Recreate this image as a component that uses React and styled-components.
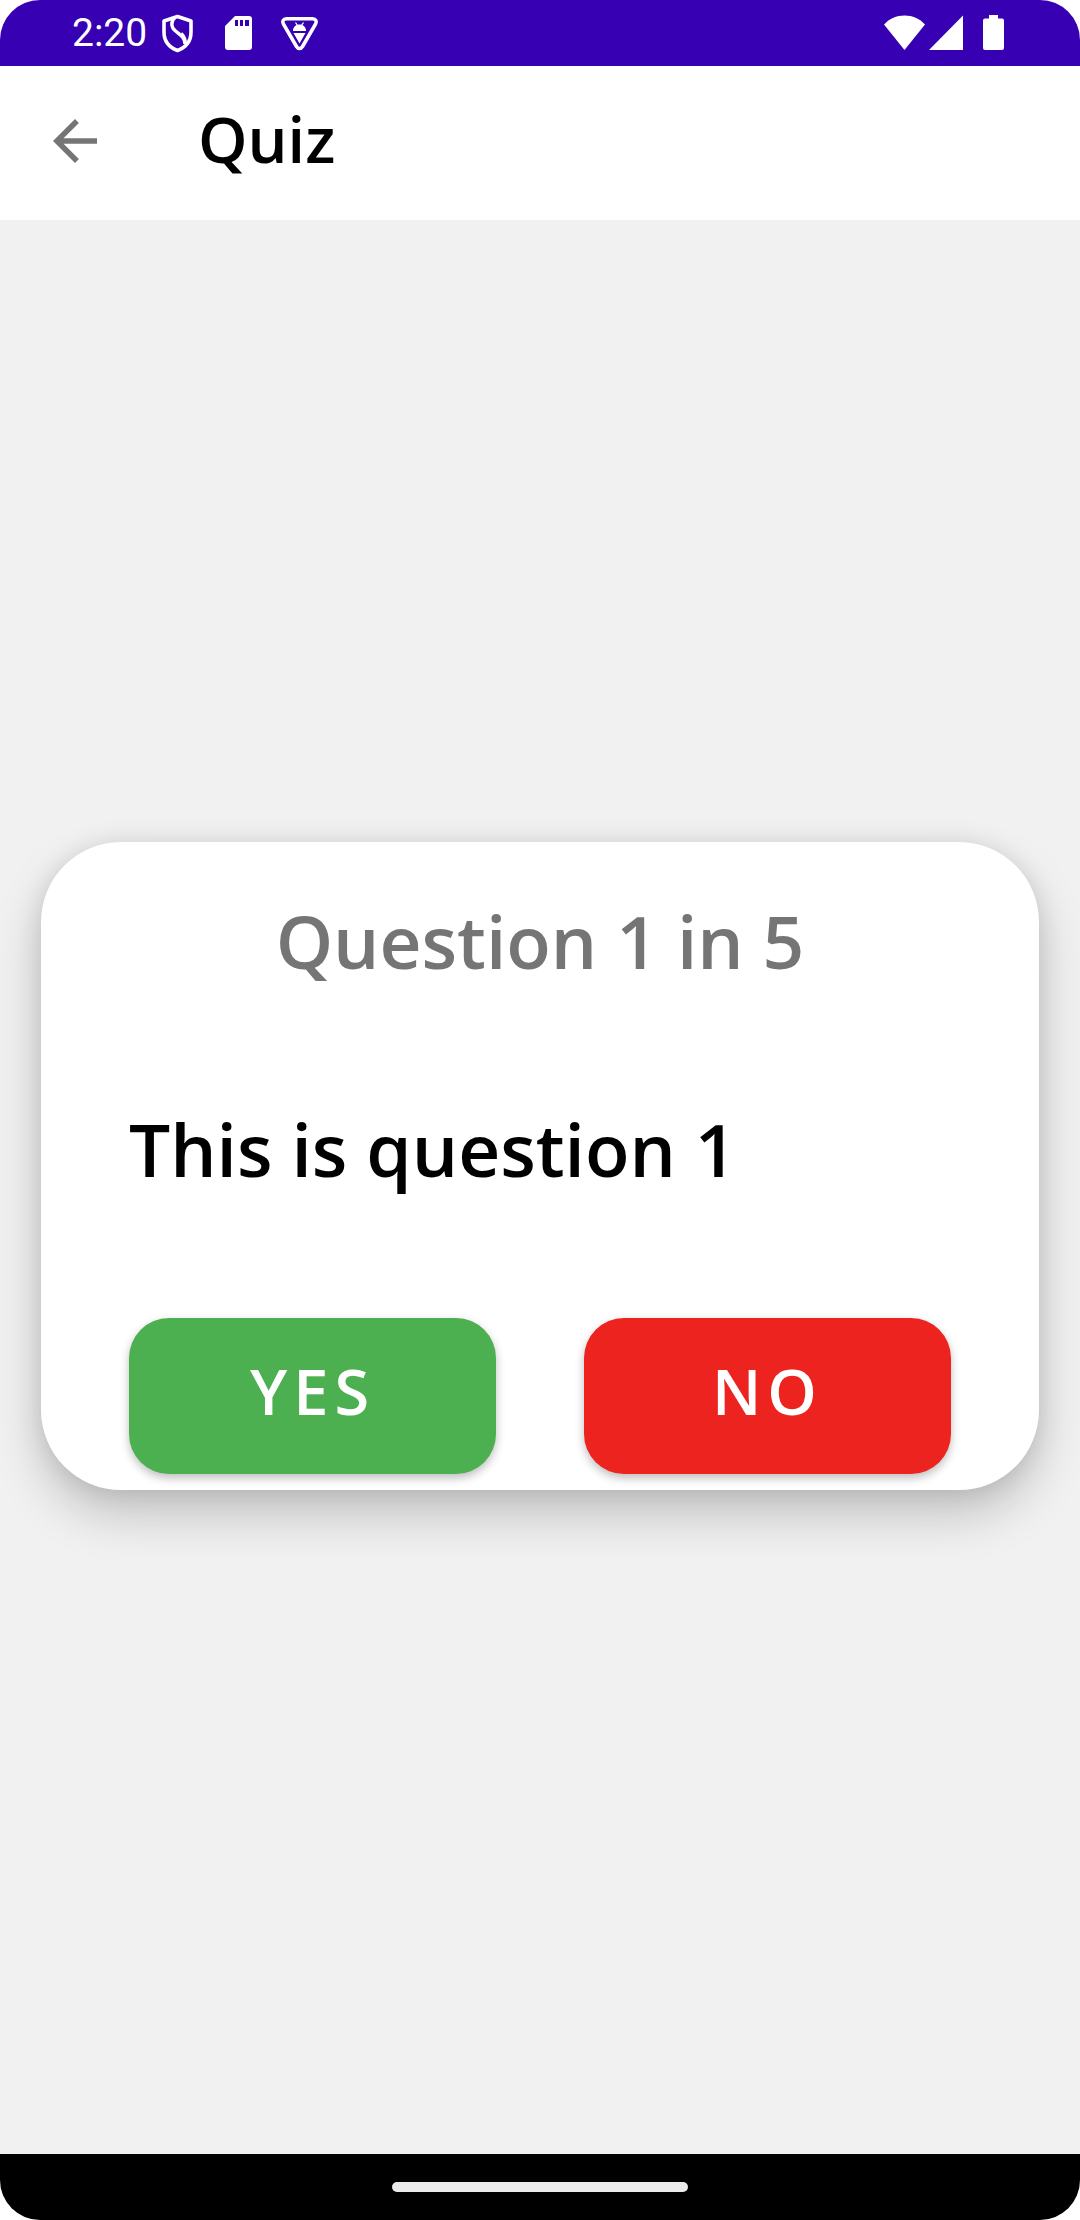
import React from "react";
import styled, { createGlobalStyle } from "styled-components";

const GlobalStyle = createGlobalStyle`
  * {
    box-sizing: border-box;
  }
  body {
    margin: 0;
    background: #ffffff;
    font-family: "Open Sans", "Noto Sans", sans-serif;
  }
`;

const Screen = styled.div`
  display: flex;
  flex-direction: column;
  min-height: 100vh;
  border-radius: 40px;
  overflow: hidden;
  background: #f1f1f1;
`;

const StatusBar = styled.div`
  display: flex;
  align-items: center;
  justify-content: space-between;
  height: 66px;
  padding: 0 76px 0 72px;
  background: #3700b3;
  color: #ffffff;
`;

const StatusGroup = styled.div`
  display: flex;
  align-items: center;
  gap: ${(p) => p.$gap}px;
`;

const Clock = styled.time`
  margin-right: -8px;
  font-family: Roboto, sans-serif;
  font-size: 39px;
  line-height: 46px;
`;

const Glyph = styled.svg`
  display: block;
  flex: none;
`;

const BatteryGlyph = styled(Glyph)`
  margin-left: 16px;
`;

const Toolbar = styled.header`
  display: flex;
  align-items: center;
  gap: 90px;
  height: 154px;
  padding: 0 42px 4px;
  background: #ffffff;
`;

const BackButton = styled.button`
  padding: 0;
  border: 0;
  background: none;
  color: #757575;
  cursor: pointer;
`;

const Title = styled.h1`
  margin: 0;
  padding-bottom: 4px;
  color: #000000;
  font-size: 63px;
  font-weight: 600;
  line-height: 80px;
`;

const Main = styled.main`
  display: flex;
  flex: 1;
  flex-direction: column;
  justify-content: center;
  padding: 0 41px 42px;
`;

const Card = styled.section`
  padding: 49px 88px 16px;
  border-radius: 80px;
  background: #ffffff;
  box-shadow: 0 24px 50px rgba(0, 0, 0, 0.2), 0 2px 24px rgba(0, 0, 0, 0.1);
`;

const Progress = styled.p`
  margin: 0 0 108px;
  color: #757575;
  font-size: 73px;
  font-weight: 600;
  line-height: 100px;
  text-align: center;
`;

const Question = styled.h2`
  margin: 0 0 119px;
  color: #000000;
  font-size: 73px;
  font-weight: 600;
  line-height: 100px;
`;

const Answers = styled.div`
  display: grid;
  grid-template-columns: 1fr 1fr;
  gap: 88px;
`;

const AnswerButton = styled.button`
  height: 156px;
  padding: 0 0 10px;
  border: 0;
  border-radius: 40px;
  background: ${(p) => p.$color};
  box-shadow: 0 4px 10px rgba(0, 0, 0, 0.26);
  color: #ffffff;
  font-family: inherit;
  font-size: 63px;
  font-weight: 600;
  letter-spacing: 6px;
  line-height: 80px;
  cursor: pointer;
`;

const NavigationBar = styled.footer`
  display: flex;
  align-items: center;
  justify-content: center;
  height: 66px;
  background: #000000;
`;

const HomeHandle = styled.div`
  width: 296px;
  height: 10px;
  border-radius: 5px;
  background: #ebebeb;
`;

function ShieldIcon() {
  return (
    <Glyph width="45" height="40" viewBox="0 0 45 40" fill="none" stroke="#fff" aria-hidden="true">
      <path d="M22.5 3.500 36 8v11c0 9-5.500 15.500-13.500 18.500C14.500 34.500 9 28 9 19V8z" strokeWidth="3.600" strokeLinejoin="round" />
      <path d="M20 4.500c-4.500 4-4 9.500 0 13 4.500 4 10 6.500 10 13.500" strokeWidth="3.400" />
      <path d="M30.500 31c1-5-2-9-4-11" strokeWidth="2.400" />
    </Glyph>
  );
}

function SdCardIcon() {
  return (
    <Glyph width="45" height="40" viewBox="0 0 45 40" aria-hidden="true">
      <path
        fill="#fff"
        fillRule="evenodd"
        d="M19 3h14a3 3 0 0 1 3 3v28a3 3 0 0 1-3 3H12a3 3 0 0 1-3-3V13zM19 7v6h3V7zM24 7v6h3V7zM29 7v6h4V7z"
      />
    </Glyph>
  );
}

function DebugIcon() {
  return (
    <Glyph width="45" height="40" viewBox="0 0 45 40" aria-hidden="true">
      <path
        d="M9.500 5.800h26c3.400 0 4.700 2.700 3 5.400L25.500 33.500c-1.700 2.700-4.300 2.700-6 0L6.500 11.200c-1.700-2.700-.4-5.400 3-5.400z"
        fill="none"
        stroke="#fff"
        strokeWidth="3.600"
        strokeLinejoin="round"
      />
      <path d="M16 18c0-4 2.800-6.500 6.500-6.500s6.500 2.500 6.500 6.500zM16.500 20h12l-6 10.500z" fill="#fff" />
      <path d="M18.500 9.500l2 3M26.500 9.500l-2 3" stroke="#fff" strokeWidth="1.300" />
    </Glyph>
  );
}

function WifiIcon() {
  return (
    <Glyph width="41" height="36" viewBox="0 0 41 36" aria-hidden="true">
      <path d="M0 9.500C5.500 3.500 12.500.500 20.500.500S35.500 3.500 41 9.500L20.500 35z" fill="#fff" />
    </Glyph>
  );
}

function SignalIcon() {
  return (
    <Glyph width="34" height="36" viewBox="0 0 34 36" aria-hidden="true">
      <path d="M34 .500V35H0z" fill="#fff" />
    </Glyph>
  );
}

function BatteryIcon() {
  return (
    <BatteryGlyph width="21" height="36" viewBox="0 0 21 36" aria-hidden="true">
      <path d="M6 0h9v3.500h4a2 2 0 0 1 2 2V33a2 2 0 0 1-2 2H2a2 2 0 0 1-2-2V5.500a2 2 0 0 1 2-2h4z" fill="#fff" />
    </BatteryGlyph>
  );
}

function BackIcon() {
  return (
    <Glyph width="66" height="66" viewBox="0 0 24 24" aria-hidden="true">
      <path d="M20 11H7.830l5.590-5.590L12 4l-8 8 8 8 1.410-1.410L7.830 13H20v-2z" fill="currentColor" />
    </Glyph>
  );
}

const ANSWERS = [
  { label: "YES", color: "#4caf50" },
  { label: "NO", color: "#ed231f" },
];

export default function App() {
  return (
    <>
      <GlobalStyle />
      <Screen>
        <StatusBar>
          <StatusGroup $gap={16}>
            <Clock>2:20</Clock>
            <ShieldIcon />
            <SdCardIcon />
            <DebugIcon />
          </StatusGroup>
          <StatusGroup $gap={4}>
            <WifiIcon />
            <SignalIcon />
            <BatteryIcon />
          </StatusGroup>
        </StatusBar>
        <Toolbar>
          <BackButton type="button" aria-label="Back">
            <BackIcon />
          </BackButton>
          <Title>Quiz</Title>
        </Toolbar>
        <Main>
          <Card>
            <Progress>Question 1 in 5</Progress>
            <Question>This is question 1</Question>
            <Answers>
              {ANSWERS.map(({ label, color }) => (
                <AnswerButton key={label} type="button" $color={color}>
                  {label}
                </AnswerButton>
              ))}
            </Answers>
          </Card>
        </Main>
        <NavigationBar>
          <HomeHandle />
        </NavigationBar>
      </Screen>
    </>
  );
}
